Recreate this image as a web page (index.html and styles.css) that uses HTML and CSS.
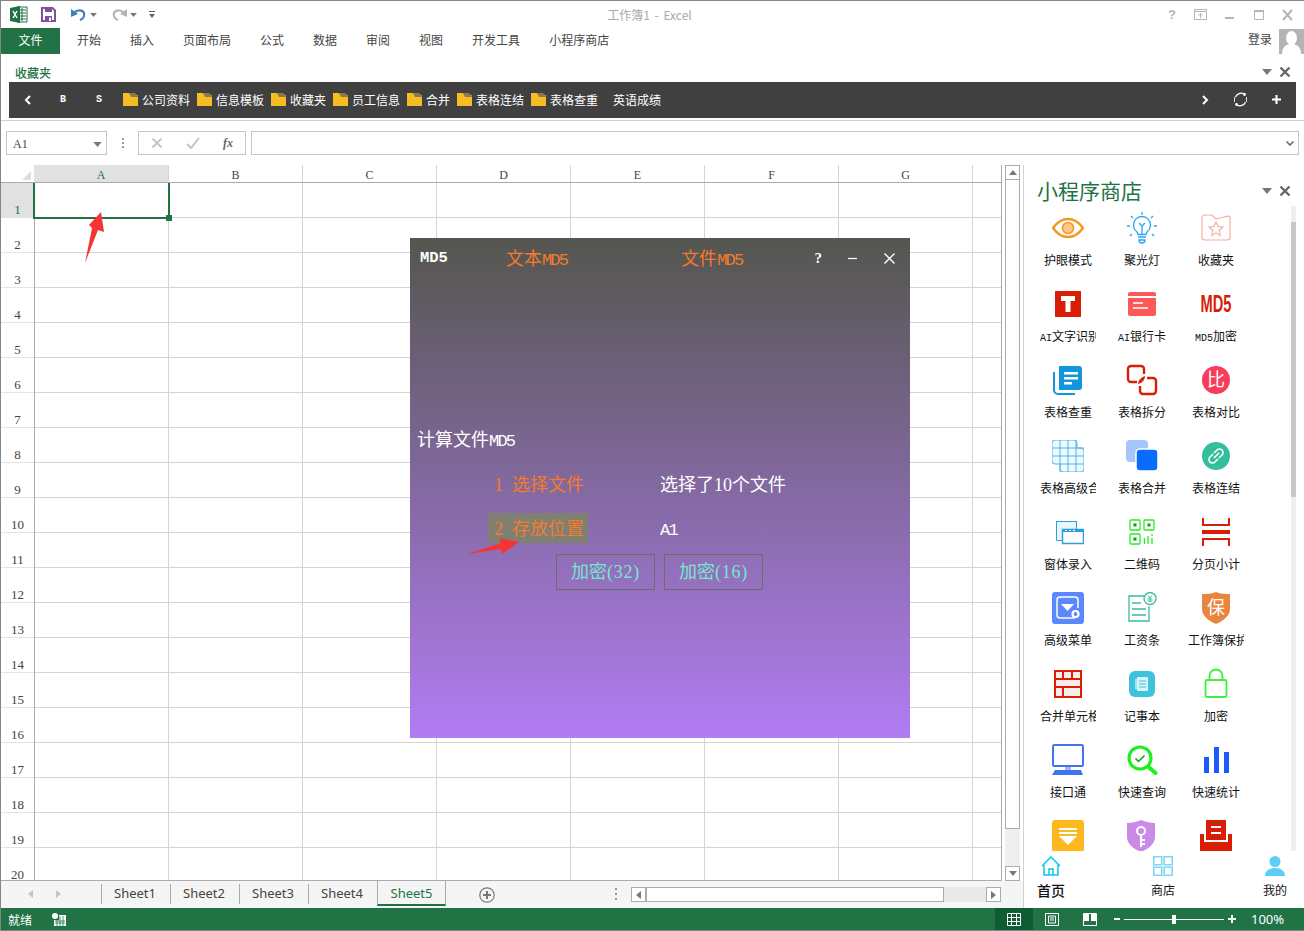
FILE: index.html
```html
<!DOCTYPE html>
<html lang="zh-CN">
<head>
<meta charset="utf-8">
<title>工作簿1 - Excel</title>
<link rel="stylesheet" href="styles.css">
</head>
<body>
<svg class="defs" width="0" height="0" aria-hidden="true">
  <symbol id="folder" viewBox="0 0 16 15">
    <path d="M0 1h6l2 2h7v11H0z" fill="#f6bd22"/>
    <path d="M6 1h6l3 3v1H8z" fill="#8d7a4c"/>
  </symbol>
  <symbol id="caret" viewBox="0 0 10 6"><path d="M0 0h10L5 6z" fill="#777"/></symbol>
  <symbol id="cross" viewBox="0 0 12 12"><path d="M1.500 1.500l9 9M10.500 1.500l-9 9" stroke="#666" stroke-width="2.400" fill="none"/></symbol>
</svg>
<div class="app">

  <header class="titlebar">
    <div class="qat">
      <svg class="qat-excel" width="18" height="17" viewBox="0 0 18 17"><path d="M7 1h10v15H7z" fill="#fff" stroke="#1f7144"/><path d="M9 4h7M9 7h7M9 10h7M9 13h7M12 2v13" stroke="#1f7144"/><path d="M0 2l10-2v17L0 15z" fill="#1f7144"/><path d="M3 5l4 7M7 5l-4 7" stroke="#fff" stroke-width="1.500"/></svg>
      <svg class="qat-save" width="15" height="15" viewBox="0 0 15 15"><path d="M1 1h10.500L14 3.500V14H1z" fill="#fff" stroke="#80509f" stroke-width="2"/><path d="M4 1h7v4H4z" fill="#80509f"/><path d="M4 9h7v5H4z" fill="#80509f"/><path d="M8 10.500h2V14H8z" fill="#fff"/></svg>
      <svg class="qat-undo" width="16" height="15" viewBox="0 0 16 15"><path d="M3 7C4 3 11 2 13 6c1 3-1 6-4 7" fill="none" stroke="#3f7fc0" stroke-width="2.200"/><path d="M0 2l7 5-7 3z" fill="#3f7fc0"/></svg>
      <svg class="qat-caret" width="7" height="4"><use href="#caret"/></svg>
      <svg class="qat-redo" width="16" height="15" viewBox="0 0 16 15"><path d="M13 7C12 3 5 2 3 6c-1 3 1 6 4 7" fill="none" stroke="#b5b5b5" stroke-width="2.200"/><path d="M16 2l-7 5 7 3z" fill="#b5b5b5"/></svg>
      <svg class="qat-caret qat-caret-off" width="7" height="4"><use href="#caret"/></svg>
      <svg class="qat-custom" width="6" height="8" viewBox="0 0 6 8"><path d="M0 0h6v1H0z" fill="#666"/><path d="M0 3h6L3 7z" fill="#666"/></svg>
    </div>
    <div class="doc-title">工作簿1 - Excel</div>
    <div class="win-ctrls">
      <span class="win-ctrl win-help">?</span>
      <svg class="win-ctrl" width="14" height="12" viewBox="0 0 14 12"><path d="M.500.500h12v10H.500z" fill="none" stroke="#b5b5b5"/><path d="M1 2.500h11" stroke="#b5b5b5"/><path d="M6.500 9V5M4.500 6.500l2-2 2 2" fill="none" stroke="#b5b5b5"/></svg>
      <svg class="win-ctrl" width="14" height="12" viewBox="0 0 14 12"><path d="M2 9h9" stroke="#b5b5b5" stroke-width="2"/></svg>
      <svg class="win-ctrl" width="14" height="12" viewBox="0 0 14 12"><path d="M2.500 1.500h9v9h-9z" fill="none" stroke="#b5b5b5"/><path d="M2 2h10" stroke="#b5b5b5" stroke-width="2"/></svg>
      <svg class="win-ctrl" width="14" height="12" viewBox="0 0 14 12"><path d="M2 1l9 10M11 1L2 11" stroke="#b5b5b5" stroke-width="2"/></svg>
    </div>
  </header>

  <nav class="ribbon-tabs">
    <div class="tab-file">文件</div>
    <div class="tab-list">
      <span>开始</span><span>插入</span><span>页面布局</span><span>公式</span><span>数据</span><span>审阅</span><span>视图</span><span>开发工具</span><span>小程序商店</span>
    </div>
    <div class="account">
      <span>登录</span>
      <div class="avatar">
        <svg width="25" height="25" viewBox="0 0 25 25"><ellipse cx="12.500" cy="9" rx="5.500" ry="7" fill="#fff"/><path d="M3 25c0-7 4-9 7-10h5c3 1 7 3 7 10z" fill="#fff"/></svg>
      </div>
    </div>
  </nav>

  <section class="fav-panel">
    <div class="fav-head">
      <span class="fav-title">收藏夹</span>
      <div class="pane-ctrls">
        <svg width="10" height="6"><use href="#caret"/></svg>
        <svg width="12" height="12"><use href="#cross"/></svg>
      </div>
    </div>
    <div class="fav-bar">
      <svg class="fav-nav" width="7" height="10" viewBox="0 0 7 10"><path d="M6 1L2 5l4 4" fill="none" stroke="#fff" stroke-width="2"/></svg>
      <span class="fav-letter fav-b">B</span>
      <span class="fav-letter fav-s">S</span>
      <span class="fav-item"><svg width="16" height="15"><use href="#folder"/></svg>公司资料</span>
      <span class="fav-item"><svg width="16" height="15"><use href="#folder"/></svg>信息模板</span>
      <span class="fav-item"><svg width="16" height="15"><use href="#folder"/></svg>收藏夹</span>
      <span class="fav-item"><svg width="16" height="15"><use href="#folder"/></svg>员工信息</span>
      <span class="fav-item"><svg width="16" height="15"><use href="#folder"/></svg>合并</span>
      <span class="fav-item"><svg width="16" height="15"><use href="#folder"/></svg>表格连结</span>
      <span class="fav-item"><svg width="16" height="15"><use href="#folder"/></svg>表格查重</span>
      <span class="fav-item fav-plain">英语成绩</span>
      <div class="fav-tools">
        <svg width="7" height="10" viewBox="0 0 7 10"><path d="M1 1l4 4-4 4" fill="none" stroke="#fff" stroke-width="2"/></svg>
        <svg width="15" height="15" viewBox="0 0 15 15"><path d="M2.500 5A6 6 0 0 1 11 2M12.500 10A6 6 0 0 1 4 13" fill="none" stroke="#fff" stroke-width="1.300"/><circle cx="11.500" cy="2.500" r="1.400" fill="#fff"/><circle cx="3.500" cy="12.500" r="1.400" fill="#fff"/><path d="M13.500 5v5M1.500 5v5" stroke="#ddd"/></svg>
        <svg width="9" height="9" viewBox="0 0 9 9"><path d="M4.500 0v9M0 4.500h9" stroke="#fff" stroke-width="2"/></svg>
      </div>
    </div>
  </section>

  <section class="formula-bar">
    <div class="name-box"><span>A1</span><svg width="9" height="5"><use href="#caret"/></svg></div>
    <div class="fx-dots"><i></i><i></i><i></i></div>
    <div class="fx-box">
      <svg width="12" height="12" viewBox="0 0 12 12"><path d="M1.500 1.500l9 9M10.500 1.500l-9 9" stroke="#c4c4c4" stroke-width="1.800"/></svg>
      <svg width="14" height="12" viewBox="0 0 14 12"><path d="M1 7l4 4 8-10" fill="none" stroke="#c4c4c4" stroke-width="2"/></svg>
      <span class="fx-label">fx</span>
    </div>
    <div class="fx-input"><svg width="8" height="5" viewBox="0 0 8 5"><path d="M.500.500L4 4 7.500.500" fill="none" stroke="#666" stroke-width="1.500"/></svg></div>
  </section>

  <main class="workspace">
    <div class="book">
      <div class="book-top">
        <div class="sheet">
          <div class="col-heads">
            <div class="corner"><i></i></div>
            <span class="col-head col-active">A</span><span class="col-head">B</span><span class="col-head">C</span><span class="col-head">D</span><span class="col-head">E</span><span class="col-head">F</span><span class="col-head">G</span><span class="col-rest"></span>
          </div>
          <div class="sheet-body">
            <div class="row-heads">
              <span class="row-head row-active">1</span><span class="row-head">2</span><span class="row-head">3</span><span class="row-head">4</span><span class="row-head">5</span><span class="row-head">6</span><span class="row-head">7</span><span class="row-head">8</span><span class="row-head">9</span><span class="row-head">10</span><span class="row-head">11</span><span class="row-head">12</span><span class="row-head">13</span><span class="row-head">14</span><span class="row-head">15</span><span class="row-head">16</span><span class="row-head">17</span><span class="row-head">18</span><span class="row-head">19</span><span class="row-head">20</span>
            </div>
            <div class="cells">
              <div class="selection"><i></i></div>
              <svg class="arrow-a" width="24" height="56" viewBox="0 0 24 56"><path d="M17 1L5 14l3 3L1 52l13-33 6 2z" fill="#f63434"/></svg>
            </div>
          </div>
        </div>
        <div class="vscroll">
          <div class="vs-btn"><svg width="8" height="5" viewBox="0 0 8 5"><path d="M0 5h8L4 0z" fill="#777"/></svg></div>
          <div class="vs-thumb"></div>
          <div class="vs-track"></div>
          <div class="vs-btn"><svg width="8" height="5"><use href="#caret"/></svg></div>
        </div>
      </div>
      <div class="sheet-tabs">
        <div class="tab-nav">
          <svg width="5" height="8" viewBox="0 0 5 8"><path d="M5 0v8L0 4z" fill="#c4c4c4"/></svg>
          <svg width="5" height="8" viewBox="0 0 5 8"><path d="M0 0v8l5-4z" fill="#c4c4c4"/></svg>
        </div>
        <span class="sheet-tab">Sheet1</span><span class="sheet-tab">Sheet2</span><span class="sheet-tab">Sheet3</span><span class="sheet-tab">Sheet4</span><span class="sheet-tab sheet-tab-on">Sheet5</span>
        <svg class="add-sheet" width="16" height="16" viewBox="0 0 16 16"><circle cx="8" cy="8" r="7.200" fill="none" stroke="#777" stroke-width="1.200"/><path d="M8 4v8M4 8h8" stroke="#777" stroke-width="2"/></svg>
        <div class="hs-dots"><i></i><i></i><i></i></div>
        <div class="hscroll">
          <div class="hs-btn"><svg width="5" height="8" viewBox="0 0 5 8"><path d="M5 0v8L0 4z" fill="#777"/></svg></div>
          <div class="hs-thumb"></div>
          <div class="hs-track"></div>
          <div class="hs-btn"><svg width="5" height="8" viewBox="0 0 5 8"><path d="M0 0v8l5-4z" fill="#777"/></svg></div>
        </div>
      </div>
    </div>

    <aside class="store">
      <div class="store-head">
        <h2 class="store-title">小程序商店</h2>
        <div class="pane-ctrls">
          <svg width="10" height="6"><use href="#caret"/></svg>
          <svg width="12" height="12"><use href="#cross"/></svg>
        </div>
      </div>
      <div class="store-body">
        <div class="store-grid">
          <div class="app-item"><svg class="app-icon" viewBox="0 0 32 32"><path d="M1 16C6 9 11 7 16 7s10 2 15 9c-5 7-10 9-15 9S6 23 1 16z" fill="none" stroke="#f7981d" stroke-width="2.400"/><circle cx="16" cy="16" r="5.500" fill="#fbc78a" stroke="#f7981d" stroke-width="1.500"/></svg><span class="app-name">护眼模式</span></div>
          <div class="app-item"><svg class="app-icon" viewBox="0 0 32 32"><path d="M10.500 19.500a8.500 8.500 0 1 1 11 0c-1 1-1.500 2-1.500 3h-8c0-1-.500-2-1.500-3z" fill="none" stroke="#2aa5f5" stroke-width="1.300"/><path d="M13 11l3 3 3-3M16 14v8M12 25h8M13 28h6a3 3 0 0 1-6 0z" fill="none" stroke="#2aa5f5" stroke-width="1.300"/><path d="M16 0v3M5 4l2 2M27 4l-2 2M1 14h3M28 14h3M4 24l2-2M28 24l-2-2" stroke="#2aa5f5" stroke-width="1.300"/></svg><span class="app-name">聚光灯</span></div>
          <div class="app-item"><svg class="app-icon" viewBox="0 0 32 32"><path d="M5 3h7l4 4 13-3 1 2v19a3 3 0 0 1-3 3H5a3 3 0 0 1-3-3V6a3 3 0 0 1 3-3z" fill="none" stroke="#f9a89b" stroke-width="1.100"/><path d="M16 10l2 4.500 5 .500-3.700 3.300 1 5L16 20.800 11.700 23.300l1-5L9 15l5-.500z" fill="none" stroke="#f9a89b" stroke-width="1.100"/></svg><span class="app-name">收藏夹</span></div>

          <div class="app-item"><svg class="app-icon" viewBox="0 0 32 32"><path d="M3 3h26v26H3z" fill="#d81e06"/><path d="M9 8h14v5h-4.500v11h-5V13H9z" fill="#fff"/></svg><span class="app-name"><span class="mono">AI</span>文字识别</span></div>
          <div class="app-item"><svg class="app-icon" viewBox="0 0 32 32"><path d="M2 6a2 2 0 0 1 2-2h24a2 2 0 0 1 2 2v2H2zM2 10h28v16a2 2 0 0 1-2 2H4a2 2 0 0 1-2-2z" fill="#fb5a58"/><path d="M7 15h10M7 20h15" stroke="#fff" stroke-width="1.500"/></svg><span class="app-name"><span class="mono">AI</span>银行卡</span></div>
          <div class="app-item"><svg class="app-icon" viewBox="0 0 32 32"><text class="md5-logo" x="16" y="24" text-anchor="middle" textLength="31" lengthAdjust="spacingAndGlyphs">MD5</text></svg><span class="app-name"><span class="mono">MD5</span>加密</span></div>

          <div class="app-item"><svg class="app-icon" viewBox="0 0 32 32"><path d="M7 2h20a3 3 0 0 1 3 3v18a3 3 0 0 1-3 3H7z" fill="#1296db"/><path d="M2 8v18a4 4 0 0 0 4 4h17" fill="none" stroke="#1296db" stroke-width="2"/><path d="M12 8h14v2.500H12zM12 13h14v2.500H12zM12 18h8v2.500h-8z" fill="#fff"/></svg><span class="app-name">表格查重</span></div>
          <div class="app-item"><svg class="app-icon" viewBox="0 0 32 32"><path d="M11 18H5a3 3 0 0 1-3-3V5a3 3 0 0 1 3-3h10a3 3 0 0 1 3 3v5" fill="none" stroke="#d81e06" stroke-width="2.400"/><path d="M21 14h6a3 3 0 0 1 3 3v10a3 3 0 0 1-3 3H17a3 3 0 0 1-3-3v-5" fill="none" stroke="#d81e06" stroke-width="2.400"/><path d="M12 20c0-4 4-7 7-8 0 4-3 7-7 8z" fill="#d81e06"/></svg><span class="app-name">表格拆分</span></div>
          <div class="app-item"><svg class="app-icon" viewBox="0 0 32 32"><circle cx="16" cy="16" r="14" fill="#f73d5b"/><text class="glyph-bi" x="16" y="22" text-anchor="middle">比</text></svg><span class="app-name">表格对比</span></div>

          <div class="app-item"><svg class="app-icon" viewBox="0 0 32 32"><path d="M3 0h19a3 3 0 0 1 3 3v5h4a3 3 0 0 1 3 3v18a3 3 0 0 1-3 3H11a3 3 0 0 1-3-3v-5H3a3 3 0 0 1-3-3V3a3 3 0 0 1 3-3z" fill="#eef8fd" stroke="#4db5e8"/><path d="M0 8h32M0 16h32M8 24h24M8 0v32M16 0v32M24 0v32" stroke="#4db5e8"/></svg><span class="app-name">表格高级合并</span></div>
          <div class="app-item"><svg class="app-icon" viewBox="0 0 32 32"><rect x="0" y="0" width="22" height="22" rx="4" fill="#a5c6fa"/><rect x="10" y="9" width="22" height="22" rx="4" fill="#0a6cff" stroke="#fff" stroke-width="1.500"/></svg><span class="app-name">表格合并</span></div>
          <div class="app-item"><svg class="app-icon" viewBox="0 0 32 32"><circle cx="16" cy="16" r="14" fill="#33bf9e"/><path d="M14 18l5-5M13 14l-3 3a3 3 0 0 0 5 5l3-3M19 18l3-3a3 3 0 0 0-5-5l-3 3" fill="none" stroke="#fff" stroke-width="1.600"/></svg><span class="app-name">表格连结</span></div>

          <div class="app-item"><svg class="app-icon" viewBox="0 0 32 32"><path d="M4 5h21v4H6v15H4z" fill="#2aa0dc"/><path d="M4.500 5.500h20v19h-20z" fill="#e9f5fc" stroke="#2aa0dc"/><path d="M10.500 13.500h21v14h-21z" fill="#fff" stroke="#2aa0dc" stroke-width="1.500"/><path d="M10 13h22v3H10z" fill="#2aa0dc"/><path d="M7 8h2M11 8h2M15 8h2M13 14.500h2M17 14.500h2M21 14.500h2" stroke="#fff"/></svg><span class="app-name">窗体录入</span></div>
          <div class="app-item"><svg class="app-icon" viewBox="0 0 32 32"><g fill="none" stroke="#22ee22" stroke-width="1.300"><rect x="4" y="4" width="10" height="10" rx="1"/><rect x="18" y="4" width="10" height="10" rx="1"/><rect x="4" y="18" width="10" height="10" rx="1"/></g><path d="M7.500 7.500h3v3h-3zM21.500 7.500h3v3h-3zM7.500 21.500h3v3h-3z" fill="#0c9a0c"/><path d="M18.500 22v6M22 20v8M26 18v2M26 22v6" stroke="#22ee22" stroke-width="1.300"/></svg><span class="app-name">二维码</span></div>
          <div class="app-item"><svg class="app-icon" viewBox="0 0 32 32"><path d="M3 2v7h26V2" fill="none" stroke="#d81e06" stroke-width="2"/><path d="M2 14h28v4H2z" fill="#d81e06"/><path d="M3 30v-7h26v7" fill="none" stroke="#d81e06" stroke-width="2"/></svg><span class="app-name">分页小计</span></div>

          <div class="app-item"><svg class="app-icon" viewBox="0 0 32 32"><rect width="32" height="32" rx="3" fill="#5b87ff"/><path d="M23 26H8a3 3 0 0 1-3-3V8a3 3 0 0 1 3-3h15a3 3 0 0 1 3 3v8" fill="none" stroke="#fff" stroke-width="1.500"/><path d="M9 12h13l-6.500 7z" fill="#fff"/><circle cx="23.500" cy="22" r="3" fill="none" stroke="#fff" stroke-width="2.200"/></svg><span class="app-name">高级菜单</span></div>
          <div class="app-item"><svg class="app-icon" viewBox="0 0 32 32"><path d="M20 4H3v25h20V14" fill="none" stroke="#3dbb9c" stroke-width="1.300"/><path d="M6 11h9M6 17h14M6 23h14" stroke="#3dbb9c" stroke-width="1.300"/><circle cx="24" cy="6.500" r="6" fill="#fff" stroke="#3dbb9c" stroke-width="1.300"/><path d="M22 3.500l2 2.500 2-2.500M21.500 7h5M21.500 9h5M24 6v4" fill="none" stroke="#3dbb9c"/></svg><span class="app-name">工资条</span></div>
          <div class="app-item"><svg class="app-icon" viewBox="0 0 32 32"><path d="M16 0c5 2 9 2 14 2v15c0 7-7 12-14 15C9 29 2 24 2 17V2c5 0 9 0 14-2z" fill="#e8853f"/><text class="glyph-bao" x="16" y="22" text-anchor="middle">保</text></svg><span class="app-name">工作簿保护</span></div>

          <div class="app-item"><svg class="app-icon" viewBox="0 0 32 32"><path d="M2 2h28v28H2z" fill="#d81e06"/><path d="M4 4h6v6H4zM12 4h7v6h-7zM21 4h7v6h-7zM4 12h24v6H4zM4 20h6v8H4zM12 20h16v8H12z" fill="#f9ece9"/></svg><span class="app-name">合并单元格</span></div>
          <div class="app-item"><svg class="app-icon" viewBox="0 0 32 32"><rect x="3" y="3" width="26" height="26" rx="6" fill="#3cc4de"/><path d="M11 9h11v14H11z" fill="#d9f4f9"/><path d="M9 11h2v10H9z" fill="#a4e4f0"/><path d="M13 13h7M13 16h7M13 19h7" stroke="#3cc4de"/></svg><span class="app-name">记事本</span></div>
          <div class="app-item"><svg class="app-icon" viewBox="0 0 32 32"><rect x="5.500" y="12" width="21" height="17" rx="1.500" fill="none" stroke="#3cf03c" stroke-width="1.800"/><path d="M9.500 12V8a6.500 6.500 0 0 1 13 0v4" fill="none" stroke="#3cf03c" stroke-width="1.800"/></svg><span class="app-name">加密</span></div>

          <div class="app-item"><svg class="app-icon" viewBox="0 0 32 32"><rect x="1" y="1" width="30" height="21" rx="1.500" fill="#fff" stroke="#3f74ee" stroke-width="2"/><path d="M13 23h6v3h-6z" fill="#9db8f5"/><path d="M3 26h26l2 5H0z" fill="#3f74ee"/></svg><span class="app-name">接口通</span></div>
          <div class="app-item"><svg class="app-icon" viewBox="0 0 32 32"><circle cx="14" cy="14" r="11" fill="none" stroke="#1ef01e" stroke-width="3.200"/><path d="M22.500 23l7 6" stroke="#1ef01e" stroke-width="4" stroke-linecap="round"/><path d="M9.500 14.500l3 3 6-6" fill="none" stroke="#12a012" stroke-width="1.500"/></svg><span class="app-name">快速查询</span></div>
          <div class="app-item"><svg class="app-icon" viewBox="0 0 32 32"><path d="M4 13h5v16H4zM14 3h5v26h-5zM24 8h5v21h-5z" fill="#1a5cf5"/></svg><span class="app-name">快速统计</span></div>

          <div class="app-item"><svg class="app-icon" viewBox="0 0 32 32"><rect width="32" height="32" rx="3" fill="#fdb81e"/><path d="M7 8h18v2H7zM7 12h18v2H7zM7 16h18l-9 9z" fill="#fff"/></svg></div>
          <div class="app-item"><svg class="app-icon" viewBox="0 0 32 32"><path d="M15 0c5 2 9 3 14 3v14c0 7-7 12-14 15C8 29 1 24 1 17V3c5 0 9-1 14-3z" fill="#c98ae8"/><circle cx="15" cy="11" r="4" fill="none" stroke="#fff" stroke-width="2"/><path d="M15 15v12M15 20h4M15 24h4" stroke="#fff" stroke-width="2"/></svg></div>
          <div class="app-item"><svg class="app-icon" viewBox="0 0 32 32"><path d="M6 0h20v20H6z" fill="#d81e06"/><path d="M11 6h10v2H11zM11 12h10v2H11z" fill="#fff"/><path d="M0 14h4v8h24v-8h4v18H0z" fill="#d81e06"/></svg></div>
        </div>
        <div class="store-scroll"><i></i></div>
      </div>
      <div class="store-nav">
        <div class="nav-item">
          <svg width="20" height="20" viewBox="0 0 20 20"><path d="M1 10l9-9 9 9M3 9v10h14V9" fill="none" stroke="#0ac8f5" stroke-width="1.500"/><path d="M8 19v-6h4v6" fill="none" stroke="#0ac8f5" stroke-width="1.500"/></svg>
          <span class="nav-home">首页</span>
        </div>
        <div class="nav-item">
          <svg width="20" height="20" viewBox="0 0 20 20"><path d="M.800.800h8v8h-8zM11.200.800h8v8h-8zM.800 11.200h8v8h-8zM11.200 11.200h8v8h-8z" fill="none" stroke="#7cd8f8" stroke-width="1.600"/></svg>
          <span>商店</span>
        </div>
        <div class="nav-item">
          <svg width="20" height="20" viewBox="0 0 20 20"><circle cx="10" cy="5.500" r="5.500" fill="#5ccdf7"/><path d="M0 20c0-5 4-8 10-8s10 3 10 8z" fill="#5ccdf7"/></svg>
          <span>我的</span>
        </div>
      </div>
    </aside>
  </main>

  <footer class="statusbar">
    <span class="status-text">就绪</span>
    <svg class="macro" width="14" height="13" viewBox="0 0 14 13"><circle cx="3" cy="3" r="3" fill="#fff"/><path d="M7 2h7v11H2V7h5z" fill="#fff"/><path d="M3 8h10M3 10h10M5 6v7M8 3v10M11 3v10" stroke="#217346" stroke-width=".8"/></svg>
    <div class="status-right">
      <div class="view-btn view-on"><svg width="14" height="13" viewBox="0 0 14 13"><path d="M.500.500h13v12H.500zM.500 4.500h13M.500 8.500h13M4.500.500v12M9.500.500v12" fill="none" stroke="#fff"/></svg></div>
      <div class="view-btn"><svg width="14" height="13" viewBox="0 0 14 13"><path d="M.500.500h13v12H.500z" fill="none" stroke="#fff"/><path d="M3.500 3h7v7h-7zM5 5h4M5 7h4" fill="none" stroke="#fff"/></svg></div>
      <div class="view-btn"><svg width="14" height="13" viewBox="0 0 14 13"><path d="M.500.500h13v12H.500z" fill="none" stroke="#fff"/><path d="M1 1h5v7H1zM8 1h5v7H8z" fill="#fff"/></svg></div>
      <div class="zoom">
        <i class="zoom-minus"></i>
        <div class="zoom-track"><i class="zoom-thumb"></i></div>
        <svg width="8" height="8" viewBox="0 0 8 8"><path d="M4 0v8M0 4h8" stroke="#fff" stroke-width="2"/></svg>
      </div>
      <span class="zoom-pct">100%</span>
    </div>
  </footer>

  <div class="dialog">
    <div class="dlg-head">
      <span class="dlg-brand">MD5</span>
      <span class="dlg-tab dlg-tab-a">文本<span class="lat">MD5</span></span>
      <span class="dlg-tab dlg-tab-b">文件<span class="lat">MD5</span></span>
      <div class="dlg-ctrls">
        <span class="dlg-help">?</span>
        <svg width="10" height="10" viewBox="0 0 10 10"><path d="M0 5.500h9" stroke="#fff" stroke-width="1.200"/></svg>
        <svg width="11" height="11" viewBox="0 0 11 11"><path d="M.500.500l10 10M10.500.500l-10 10" stroke="#fff" stroke-width="1.400"/></svg>
      </div>
    </div>
    <div class="dlg-heading">计算文件<span class="lat">MD5</span></div>
    <div class="dlg-row">
      <span class="dlg-label"><span class="num">1 </span>选择文件</span>
      <span class="dlg-value">选择了<span class="num">10</span>个文件</span>
    </div>
    <div class="dlg-row dlg-row-two">
      <span class="dlg-label dlg-label-on"><span class="num">2 </span>存放位置</span>
      <span class="dlg-value"><span class="lat">A1</span></span>
    </div>
    <div class="dlg-actions">
      <button class="dlg-btn">加密<span class="num num-wide">(32)</span></button>
      <button class="dlg-btn">加密<span class="num num-wide">(16)</span></button>
    </div>
    <svg class="arrow-b" width="56" height="20" viewBox="0 0 56 20"><path d="M1 18l34-11-2-5 20 4-17 12-1-5z" fill="#f63434"/></svg>
  </div>
</div>
</body>
</html>
```

FILE: styles.css
```css
* { box-sizing: border-box; }
html, body { margin: 0; padding: 0; background: #fff; }
body { font-family: "Noto Sans CJK SC", "Liberation Sans", sans-serif; font-size: 12px; color: #444; }
.defs { position: absolute; }
svg { display: block; flex: none; }
i { display: block; }

.app { position: relative; width: 1304px; height: 931px; overflow: hidden; display: flex; flex-direction: column; border-top: 1px solid #858585; border-left: 1px solid #858585; border-bottom: 1px solid #858585; }

/* title bar */
.titlebar { height: 27px; flex: none; display: grid; grid-template-columns: 1fr auto 1fr; align-items: center; }
.qat { display: flex; align-items: center; padding-left: 9px; }
.qat-save { margin-left: 13px; }
.qat-undo { margin-left: 15px; }
.qat-caret { margin-left: 3px; }
.qat-redo { margin-left: 14px; }
.qat-custom { margin-left: 12px; }
.doc-title { color: #aaa; margin-left: -6px; margin-top: 1px; line-height: 16px; white-space: nowrap; word-spacing: 2px; }
.win-ctrls { display: flex; justify-content: flex-end; align-items: center; gap: 15px; padding-right: 9px; }
.win-ctrl { width: 14px; text-align: center; }
.win-help { color: #b5b5b5; font: bold 13px "Liberation Sans", sans-serif; }

/* ribbon tabs */
.ribbon-tabs { height: 26px; flex: none; display: flex; align-items: stretch; }
.tab-file { width: 59px; background: #217346; color: #fff; display: flex; align-items: center; justify-content: center; padding-bottom: 3px; }
.tab-list { display: flex; align-items: center; gap: 29px; padding: 0 0 3px 17px; }
.account { margin-left: auto; display: flex; align-items: center; gap: 7px; }
.account span { margin-top: -5px; }
.avatar { width: 25px; height: 25px; background: #b4b4b4; overflow: hidden; }

/* favourites */
.fav-panel { height: 67px; flex: none; border-bottom: 1px solid #d2d2d2; }
.fav-head { height: 28px; display: flex; align-items: center; justify-content: space-between; padding: 8px 13px 0 14px; }
.fav-title { color: #217346; font-weight: 500; }
.pane-ctrls { display: flex; align-items: center; gap: 7px; }
.fav-bar { height: 36px; margin: 0 8px 0 8px; background: #404040; color: #fff; display: flex; align-items: center; padding: 0 0 1px 15px; }
.fav-letter { font: bold 10px "Liberation Mono", monospace; width: 8px; }
.fav-b { margin-left: 29px; }
.fav-s { margin-left: 28px; margin-right: 19px; }
.fav-item { display: flex; align-items: center; gap: 3px; margin-right: 7px; white-space: nowrap; }
.fav-plain { margin-left: 8px; }
.fav-tools { margin-left: auto; display: flex; align-items: center; gap: 24px; padding-right: 15px; }

/* formula bar */
.formula-bar { height: 44px; flex: none; display: flex; align-items: flex-start; padding: 10px 5px 0 5px; }
.name-box { width: 101px; height: 24px; border: 1px solid #c6c6c6; display: flex; align-items: center; justify-content: space-between; padding: 2px 4px 0 6px; font: 12px "Liberation Serif", serif; color: #444; }
.fx-dots { width: 31px; height: 24px; display: flex; flex-direction: column; align-items: center; justify-content: center; gap: 2px; }
.fx-dots i, .hs-dots i { width: 2px; height: 2px; background: #999; }
.fx-box { width: 108px; height: 24px; border: 1px solid #c6c6c6; display: flex; align-items: center; gap: 23px; padding-left: 12px; }
.fx-label { font: italic bold 12px "Liberation Serif", serif; color: #666; }
.fx-input { margin-left: 5px; flex: 1; height: 24px; border: 1px solid #c6c6c6; display: flex; align-items: center; justify-content: flex-end; padding-right: 4px; }

/* workbook */
.workspace { flex: 1; min-height: 0; display: flex; }
.book { width: 1022px; flex: none; display: flex; flex-direction: column; }
.book-top { height: 716px; flex: none; display: flex; }
.sheet { width: 1001px; flex: none; display: flex; flex-direction: column; border-right: 1px solid #ababab; border-bottom: 1px solid #ababab; }
.col-heads { height: 17px; flex: none; display: flex; border-bottom: 1px solid #ababab; font: 12px "Liberation Serif", serif; box-sizing: content-box; }
.corner { width: 33px; flex: none; position: relative; }
.corner i { position: absolute; right: 3px; bottom: 2px; width: 0; height: 0; border-left: 9px solid transparent; border-bottom: 9px solid #dcdcdc; }
.col-head { width: 134px; flex: none; text-align: center; line-height: 21px; border-right: 1px solid #d4d4d4; color: #444; }
.col-active { width: 135px; background: #e1e1e1; color: #217346; }
.col-rest { flex: 1; }
.sheet-body { flex: 1; min-height: 0; display: flex; position: relative; overflow: hidden; }
.row-heads { width: 34px; flex: none; border-right: 1px solid #ababab; }
.row-head { display: block; height: 35px; padding-top: 20px; text-align: center; font: 13px/13px "Liberation Serif", serif; color: #444; border-bottom: 1px solid #e4e4e4; }
.row-active { background: #e1e1e1; color: #217346; }
.cells { flex: 1; position: relative;
  background-image:
    repeating-linear-gradient(to right, transparent 0 133px, #d4d4d4 133px 134px),
    repeating-linear-gradient(to bottom, transparent 0 34px, #d4d4d4 34px 35px); }
.selection { position: absolute; left: -2px; top: -2px; width: 137px; height: 38px; border: 2px solid #217346; }
.selection i { position: absolute; right: -4px; bottom: -4px; width: 6px; height: 6px; background: #217346; }
.arrow-a { position: absolute; left: 49px; top: 28px; }

/* vertical scrollbar */
.vscroll { width: 15px; margin-left: 3px; flex: none; display: flex; flex-direction: column; }
.vs-btn { height: 15px; flex: none; border: 1px solid #ababab; background: #fff; display: flex; align-items: center; justify-content: center; }
.vs-thumb { height: 649px; flex: none; border: 1px solid #ababab; border-top: 0; background: #fff; }
.vs-track { flex: 1; background: #efefef; }

/* sheet tabs */
.sheet-tabs { flex: 1; display: flex; align-items: flex-start; background: #f5f5f5; position: relative; }
.tab-nav { width: 100px; height: 26px; display: flex; align-items: center; gap: 23px; padding-left: 27px; }
.sheet-tab { width: 69px; height: 20px; margin-top: 3px; padding-right: 2px; border-left: 1px solid #ababab; color: #444; font: 13px/18px "Noto Sans", sans-serif; text-align: center; }
.sheet-tab-on { height: 25px; margin-top: 0; padding-top: 3px; padding-right: 0; width: 69px; border-left: 1px solid #ababab; border-right: 1px solid #ababab; border-bottom: 2px solid #217346; color: #217346; }
.add-sheet { margin: 6px 0 0 33px; }
.hs-dots { margin: 7px 0 0 120px; display: flex; flex-direction: column; gap: 3px; }
.hscroll { width: 370px; height: 15px; margin: 6px 0 0 14px; display: flex; }
.hs-btn { width: 15px; flex: none; border: 1px solid #ababab; background: #fff; display: flex; align-items: center; justify-content: center; }
.hs-thumb { width: 298px; flex: none; border: 1px solid #ababab; background: #fff; }
.hs-track { flex: 1; background: #e9e9e9; }

/* store pane */
.store { flex: 1; min-width: 0; border-left: 1px solid #d2d2d2; display: flex; flex-direction: column; color: #111; }
.store-head { height: 41px; flex: none; display: flex; align-items: flex-end; justify-content: space-between; padding: 0 13px 1px 13px; }
.store-title { margin: 0; font-size: 21px; font-weight: 400; line-height: 30px; color: #217346; }
.store-head .pane-ctrls { margin-bottom: 8px; }
.store-body { height: 645px; flex: none; display: flex; justify-content: space-between; overflow: hidden; padding: 0 8px 0 7px; }
.store-grid { width: 222px; display: grid; grid-template-columns: repeat(3, 74px); grid-auto-rows: 76px; }
.app-item { display: flex; flex-direction: column; align-items: center; padding-top: 6px; }
.app-icon { width: 32px; height: 32px; }
.app-name { width: 56px; margin-top: 8px; line-height: 16px; text-align: center; white-space: nowrap; overflow: hidden; color: #111; display: block; }
.mono { font: 10px "Liberation Mono", monospace; }
.md5-logo { font: bold 24px "Liberation Sans", sans-serif; fill: #d81e06; }
.glyph-bi, .glyph-bao { font-family: "Noto Sans CJK SC", sans-serif; font-size: 18px; fill: #fff; }
.store-scroll { width: 5px; height: 100%; background: #efefef; padding-top: 16px; }
.store-scroll i { height: 275px; background: #c8c8c8; }
.store-nav { flex: 1; display: flex; justify-content: space-between; padding: 5px 9px 0 7px; }
.nav-item { width: 40px; display: flex; flex-direction: column; align-items: center; }
.nav-item span { margin-top: 5px; line-height: 18px; color: #111; }
.nav-home { font-size: 14px; font-weight: 500; }

/* status bar */
.statusbar { height: 22px; flex: none; background: #217346; color: #fff; display: flex; align-items: center; padding-left: 7px; }
.macro { margin-left: 20px; }
.status-right { margin-left: auto; display: flex; align-items: center; height: 100%; }
.view-btn { width: 38px; height: 100%; display: flex; align-items: center; justify-content: center; }
.view-on { background: #0e5c33; }
.zoom { display: flex; align-items: center; margin-left: 5px; }
.zoom-minus { width: 6px; height: 2px; background: #fff; }
.zoom-track { width: 100px; height: 1px; background: #fff; margin: 0 4px; position: relative; }
.zoom-thumb { position: absolute; left: 48px; top: -4px; width: 4px; height: 9px; background: #fff; }
.zoom-pct { width: 68px; padding-left: 15px; font-family: "Noto Sans", sans-serif; font-size: 13px; }

/* dialog */
.dialog { position: absolute; left: 409px; top: 237px; width: 500px; height: 500px; background: linear-gradient(to bottom, #54564e, #b27cf3); color: #fff; font-size: 18px; }
.lat { font: 17px/24px "Liberation Mono", monospace; letter-spacing: -1.800px; white-space: pre; }
.num { font: 18px/24px "Liberation Serif", serif; word-spacing: 4.500px; white-space: pre; }
.num-wide { letter-spacing: .700px; }
.dlg-head { height: 40px; display: flex; align-items: center; position: relative; line-height: 22px; }
.dlg-brand { font: bold 15.500px "Liberation Mono", monospace; margin-left: 10px; }
.dlg-tab { color: #f57a2a; height: 24px; }
.dlg-tab-a { margin-left: 58px; }
.dlg-tab-b { margin-left: 114px; }
.dlg-ctrls { margin-left: auto; display: flex; align-items: center; padding-right: 15px; gap: 26px; }
.dlg-help { font: bold 15px "Liberation Serif", serif; }
.dlg-heading { margin: 148px 0 0 7px; height: 24px; line-height: 24px; }
.dlg-row { margin-top: 19px; padding-left: 78px; display: flex; height: 30px; align-items: center; gap: 72px; }
.dlg-row-two { margin-top: 14px; }
.dlg-label { width: 100px; height: 30px; line-height: 28px; padding-left: 6px; color: #f57a2a; white-space: nowrap; }
.dlg-label-on { background: #7f7f72; }
.dlg-value { height: 30px; line-height: 28px; }
.dlg-actions { margin: 11px 0 0 146px; display: flex; gap: 9px; }
.dlg-btn { width: 99px; height: 36px; padding: 0 0 2px; background: transparent; border: 1px solid #6d6d68; color: #74e8cc; font: 18px/24px "Noto Sans CJK SC", sans-serif; }
.arrow-b { position: absolute; left: 56px; top: 298px; }
```
